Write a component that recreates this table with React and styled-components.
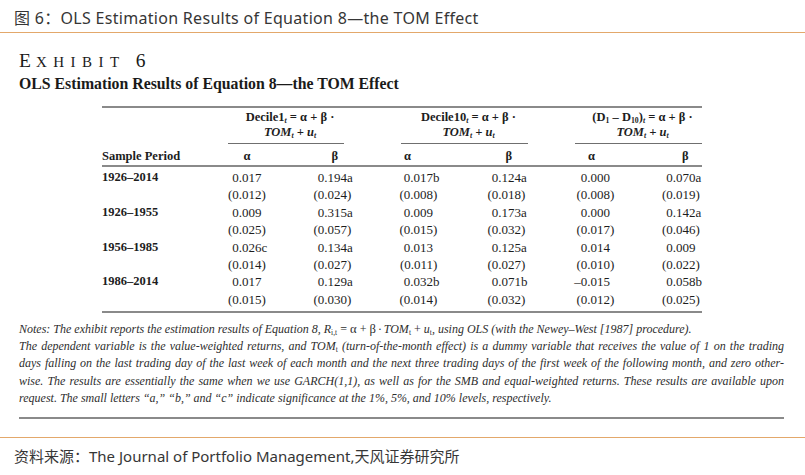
import React from "react";
import styled, { createGlobalStyle } from "styled-components";

const SERIF = `"Liberation Serif", "Times New Roman", serif`;
const SANS = `"Noto Sans", "Noto Sans CJK SC", sans-serif`;
const ORANGE = "#e3a86b";
const RULE = "#8a8a8a";

const GROUP_COLS = "126px 116px 57px 127px 47px 127px";
const BODY_COLS = "126px 40.5px 85.5px 86px 88px 89px 85.5px";

const GlobalStyle = createGlobalStyle`
  html, body {
    margin: 0;
    padding: 0;
    background: #fff;
  }
`;

const Page = styled.div`
  width: 805px;
  height: 475px;
  overflow: hidden;
  background: #fff;
  display: flex;
  flex-direction: column;
`;

const TitleBar = styled.div`
  height: 31px;
  padding: 1px 0 0 14px;
  display: flex;
  align-items: center;
  border-bottom: 1.5px solid ${ORANGE};
  font-family: ${SANS};
  font-size: 16px;
  letter-spacing: 0.3px;
  color: #363636;
  white-space: pre;
`;

const Exhibit = styled.div`
  padding: 0 21px 0 19px;
  font-family: ${SERIF};
  color: #1a1a1a;
`;

const ExhibitTitle = styled.div`
  margin-top: 18px;
  height: 20px;
  line-height: 20px;
  font-size: 19.5px;
  white-space: nowrap;
`;

const BigE = styled.span`
  letter-spacing: 5px;
`;

const Caps = styled.span`
  font-size: 15px;
  letter-spacing: 6.5px;
`;

const ExhibitNum = styled.span`
  margin-left: 10px;
`;

const Subtitle = styled.div`
  margin-top: 3.5px;
  line-height: 18px;
  font-size: 15.8px;
  font-weight: bold;
  white-space: nowrap;
`;

const Table = styled.div`
  margin: 13px 0 0 83px;
  width: 600px;
  border-top: 2px solid ${RULE};
  border-bottom: 2px solid ${RULE};
  font-size: 12.5px;
  color: #1d1d1d;
`;

const GroupRow = styled.div`
  display: grid;
  grid-template-columns: ${GROUP_COLS};
  padding-top: 2px;
`;

const GroupHead = styled.div`
  grid-column: ${(p) => p.$col};
  padding-bottom: 3.5px;
  border-bottom: 1px solid #6f6f6f;
  text-align: center;
  font-weight: bold;
  line-height: 15px;
  padding-left: 8px;
`;

const HeadLine = styled.div`
  font-style: ${(p) => (p.$italic ? "italic" : "normal")};
  white-space: nowrap;
`;

const Sub = styled.sub`
  font-size: 0.62em;
  vertical-align: -0.32em;
  line-height: 0;
  font-style: ${(p) => (p.$upright ? "normal" : "italic")};
`;

const HeadRow = styled.div`
  display: grid;
  grid-template-columns: ${BODY_COLS};
  padding: 3.5px 0 1px;
  line-height: 16px;
  border-bottom: 2px solid ${RULE};
  font-weight: bold;
`;

const Label = styled.div`
  font-weight: bold;
  white-space: nowrap;
`;

const Greek = styled.div`
  text-align: right;
  padding-right: ${(p) => p.$pad}px;
`;

const Body = styled.div`
  display: grid;
  grid-template-columns: ${BODY_COLS};
  grid-auto-rows: 17.45px;
  align-items: center;
  line-height: 17.45px;
  padding: 2.3px 0 3.1px;
`;

const Value = styled.div`
  display: flex;
  justify-content: flex-end;
  font-size: 13px;
  white-space: nowrap;
`;

const Mark = styled.span`
  display: inline-block;
  width: 7px;
  text-align: left;
`;

const Notes = styled.div`
  margin-top: 7.4px;
  font-style: italic;
  font-size: 12px;
  line-height: 17.3px;
  color: #2e2e2e;
`;

const NoteLine = styled.div`
  white-space: nowrap;
  text-align: ${(p) => (p.$justify ? "justify" : "left")};
  text-align-last: ${(p) => (p.$justify ? "justify" : "left")};
`;

const Sym = styled.span`
  font-style: normal;
  font-size: 1.05em;
`;

const BottomRule = styled.div`
  margin-top: 10px;
  height: 2px;
  background: ${RULE};
`;

const SourceBar = styled.div`
  margin-top: 18px;
  border-top: 1.5px solid ${ORANGE};
  padding: 8px 0 0 14px;
  line-height: 20px;
  font-family: ${SANS};
  font-size: 15px;
  color: #363636;
  white-space: nowrap;
`;

const ROWS = [
  {
    period: "1926–2014",
    est: ["0.017", "0.194a", "0.017b", "0.124a", "0.000", "0.070a"],
    se: ["(0.012)", "(0.024)", "(0.008)", "(0.018)", "(0.008)", "(0.019)"],
  },
  {
    period: "1926–1955",
    est: ["0.009", "0.315a", "0.009", "0.173a", "0.000", "0.142a"],
    se: ["(0.025)", "(0.057)", "(0.015)", "(0.032)", "(0.017)", "(0.046)"],
  },
  {
    period: "1956–1985",
    est: ["0.026c", "0.134a", "0.013", "0.125a", "0.014", "0.009"],
    se: ["(0.014)", "(0.027)", "(0.011)", "(0.027)", "(0.010)", "(0.022)"],
  },
  {
    period: "1986–2014",
    est: ["0.017", "0.129a", "0.032b", "0.071b", "–0.015", "0.058b"],
    se: ["(0.015)", "(0.030)", "(0.014)", "(0.032)", "(0.012)", "(0.025)"],
  },
];

// padding that puts each α / β over its column of numbers
const GREEK = [
  { sym: "α", pad: 18 },
  { sym: "β", pad: 16 },
  { sym: "α", pad: 29 },
  { sym: "β", pad: 16 },
  { sym: "α", pad: 22 },
  { sym: "β", pad: 14 },
];

const Num = ({ v }) => {
  const m = v.match(/^(.*?)([abc)]?)$/);
  return (
    <Value>
      <span>{m[1]}</span>
      <Mark>{m[2]}</Mark>
    </Value>
  );
};

const App = () => {
  return (
    <Page>
      <GlobalStyle />
      <TitleBar>图 6：OLS Estimation Results of Equation 8—the TOM Effect</TitleBar>

      <Exhibit>
        <ExhibitTitle>
          <BigE>E</BigE>
          <Caps>XHIBIT</Caps>
          <ExhibitNum>6</ExhibitNum>
        </ExhibitTitle>
        <Subtitle>OLS Estimation Results of Equation 8—the TOM Effect</Subtitle>

        <Table>
          <GroupRow>
            <GroupHead $col="2">
              <HeadLine>
                Decile1<Sub>t</Sub> = α + β ·
              </HeadLine>
              <HeadLine $italic>
                TOM<Sub>t</Sub> + u<Sub>t</Sub>
              </HeadLine>
            </GroupHead>
            <GroupHead $col="4">
              <HeadLine>
                Decile10<Sub>t</Sub> = α + β ·
              </HeadLine>
              <HeadLine $italic>
                TOM<Sub>t</Sub> + u<Sub>t</Sub>
              </HeadLine>
            </GroupHead>
            <GroupHead $col="6">
              <HeadLine>
                (D<Sub $upright>1</Sub> – D<Sub $upright>10</Sub>)<Sub>t</Sub> = α + β ·
              </HeadLine>
              <HeadLine $italic>
                TOM<Sub>t</Sub> + u<Sub>t</Sub>
              </HeadLine>
            </GroupHead>
          </GroupRow>

          <HeadRow>
            <Label>Sample Period</Label>
            {GREEK.map((g, i) => (
              <Greek key={i} $pad={g.pad}>
                {g.sym}
              </Greek>
            ))}
          </HeadRow>

          <Body>
            {ROWS.map((r) => (
              <React.Fragment key={r.period}>
                <Label>{r.period}</Label>
                {r.est.map((v, i) => (
                  <Num key={"e" + i} v={v} />
                ))}
                <Label />
                {r.se.map((v, i) => (
                  <Num key={"s" + i} v={v} />
                ))}
              </React.Fragment>
            ))}
          </Body>
        </Table>

        <Notes>
          <NoteLine>
            Notes: The exhibit reports the estimation results of Equation 8, R<Sub $upright>i,t</Sub>
            {"\u2009=\u2009"}
            <Sym>α</Sym>
            {"\u2009+\u2009"}
            <Sym>β</Sym>
            {"\u2009·\u2009"}TOM<Sub $upright>t</Sub>
            {"\u2009+\u2009"}u<Sub $upright>t</Sub>, using OLS (with the Newey–West [1987] procedure).
          </NoteLine>
          <NoteLine $justify>
            The dependent variable is the value-weighted returns, and TOM<Sub $upright>t</Sub> (turn-of-the-month
            effect) is a dummy variable that receives the value of 1 on the trading
          </NoteLine>
          <NoteLine $justify>
            days falling on the last trading day of the last week of each month and the next three trading days of
            the first week of the following month, and zero other-
          </NoteLine>
          <NoteLine $justify>
            wise. The results are essentially the same when we use GARCH(1,1), as well as for the SMB and
            equal-weighted returns. These results are available upon
          </NoteLine>
          <NoteLine>
            request. The small letters “a,” “b,” and “c” indicate significance at the 1%, 5%, and 10% levels,
            respectively.
          </NoteLine>
        </Notes>
        <BottomRule />
      </Exhibit>

      <SourceBar>资料来源：The Journal of Portfolio Management,天风证券研究所</SourceBar>
    </Page>
  );
};

export default App;
